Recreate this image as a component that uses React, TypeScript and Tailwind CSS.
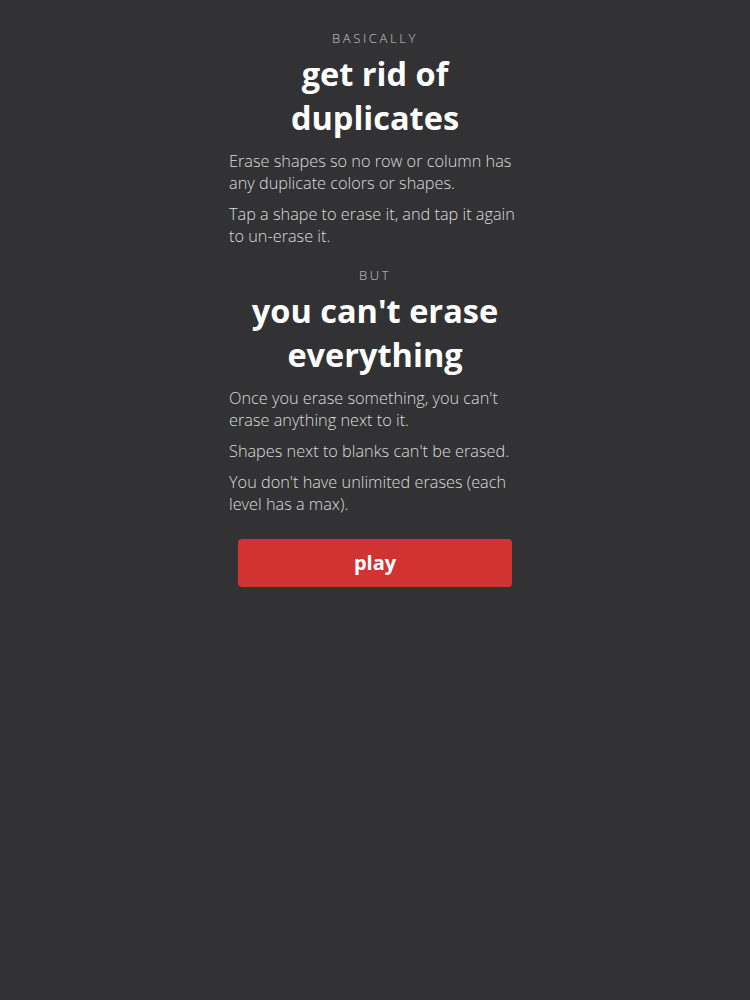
export default function App() {
  return (
    <div className="min-h-[1000px] w-full bg-[#323234] font-['Open_Sans',sans-serif]">
      <div className="mx-auto flex w-[292px] flex-col pt-[30px]">
        <p className="text-center text-[13px] leading-4 font-light tracking-[0.2em] text-[#c8c8c8]">BASICALLY</p>
        <h1 className="mt-[6px] text-center text-[32.5px] leading-[44px] font-bold text-white">
          get rid of duplicates
        </h1>
        <p className="mt-[10px] text-[16.3px] leading-[22px] font-light text-[#dcdcdc]">
          Erase shapes so no row or column has any duplicate colors or shapes.
        </p>
        <p className="mt-[9px] text-[16.3px] leading-[22px] font-light text-[#dcdcdc]">
          Tap a shape to erase it, and tap it again to un-erase it.
        </p>
        <p className="mt-[20px] text-center text-[13px] leading-4 font-light tracking-[0.2em] text-[#c8c8c8]">BUT</p>
        <h1 className="mt-[6px] text-center text-[32.5px] leading-[44px] font-bold text-white">
          you can't erase everything
        </h1>
        <p className="mt-[10px] text-[16.3px] leading-[22px] font-light text-[#dcdcdc]">
          Once you erase something, you can't erase anything next to it.
        </p>
        <p className="mt-[9px] text-[16.3px] leading-[22px] font-light text-[#dcdcdc]">
          Shapes next to blanks can't be erased.
        </p>
        <p className="mt-[9px] text-[16.3px] leading-[22px] font-light text-[#dcdcdc]">
          You don't have unlimited erases (each level has a max).
        </p>
        <button className="mx-[9px] mt-[24px] h-[48px] rounded-[4px] bg-[#d13333] text-[20px] font-bold text-white">
          play
        </button>
      </div>
    </div>
  );
}
